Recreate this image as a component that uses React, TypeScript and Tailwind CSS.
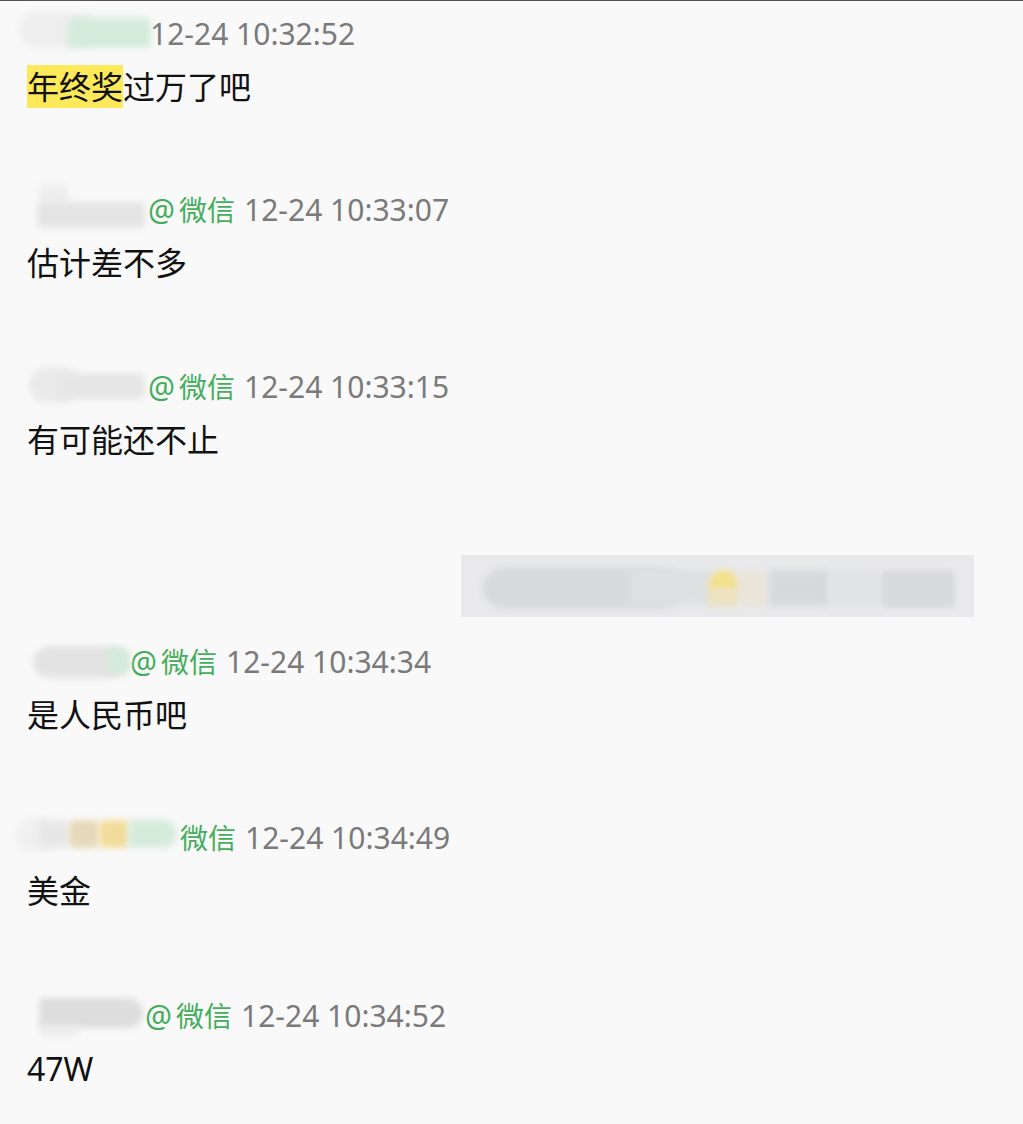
import React from 'react';

type Blob = { x: number; w: number; h: number; color: string; top?: number; round?: string };

type Msg = {
  blobs: Blob[];
  nameWidth: number;
  wechat: 'full' | 'partial' | 'none';
  time: string;
  text: React.ReactNode;
};

const font = { fontFamily: '"Noto Sans", "Noto Sans CJK SC", sans-serif' };

function NameBlur({ blobs, width }: { blobs: Blob[]; width: number }) {
  return (
    <div className="relative h-[40px] shrink-0" style={{ width }}>
      {blobs.map((b, i) => (
        <div
          key={i}
          className={`absolute blur-[3px] ${b.round ?? 'rounded-md'}`}
          style={{ left: b.x, top: b.top ?? 2, width: b.w, height: b.h, background: b.color }}
        />
      ))}
    </div>
  );
}

function Header({ m }: { m: Msg }) {
  return (
    <div className="flex items-center h-[36px] leading-none whitespace-nowrap">
      <NameBlur blobs={m.blobs} width={m.nameWidth} />
      {m.wechat === 'full' && (
        <span className="text-[#45ad5b] text-[28px]">
          <span className="text-[30px]">@</span>
          <span className="ml-[4px]">微信</span>
        </span>
      )}
      {m.wechat === 'partial' && <span className="text-[#45ad5b] text-[28px]">微信</span>}
      <span className="text-[#7a7a7a] text-[30px] ml-[9px]">{m.time}</span>
    </div>
  );
}

function Message({ m, className }: { m: Msg; className?: string }) {
  return (
    <div className={className}>
      <Header m={m} />
      <div className="h-[70px] text-[32px] leading-[70px] text-[#111] whitespace-nowrap">{m.text}</div>
    </div>
  );
}

const msgs: Msg[] = [
  {
    nameWidth: 114,
    blobs: [
      { x: -8, w: 80, h: 36, color: '#eeeeee', top: -2, round: 'rounded-full' },
      { x: 40, w: 84, h: 30, color: '#d4ecdc', top: 4 },
    ],
    wechat: 'none',
    time: '12-24 10:32:52',
    text: (
      <>
        <span className="bg-[#fde95a]">年终奖</span>过万了吧
      </>
    ),
  },
  {
    nameWidth: 121,
    blobs: [
      { x: 12, w: 30, h: 20, color: '#eeeeee', top: -6 },
      { x: 10, w: 108, h: 26, color: '#e4e4e4', top: 12 },
    ],
    wechat: 'full',
    time: '12-24 10:33:07',
    text: '估计差不多',
  },
  {
    nameWidth: 121,
    blobs: [
      { x: 2, w: 50, h: 36, color: '#eaeaea', top: 0, round: 'rounded-full' },
      { x: 30, w: 88, h: 26, color: '#e6e6e6', top: 6 },
    ],
    wechat: 'full',
    time: '12-24 10:33:15',
    text: '有可能还不止',
  },
];

const msgs2: Msg[] = [
  {
    nameWidth: 103,
    blobs: [
      { x: 6, w: 96, h: 32, color: '#e3e3e3', top: 4, round: 'rounded-full' },
      { x: 80, w: 22, h: 26, color: '#d3ecd9', top: 6 },
    ],
    wechat: 'full',
    time: '12-24 10:34:34',
    text: '是人民币吧',
  },
  {
    nameWidth: 153,
    blobs: [
      { x: -12, w: 40, h: 34, color: '#f0f0f0', top: 0, round: 'rounded-full' },
      { x: 12, w: 30, h: 28, color: '#e7e7e7', top: 2 },
      { x: 42, w: 30, h: 28, color: '#e6d9b9', top: 2 },
      { x: 72, w: 30, h: 28, color: '#f2dc9c', top: 2 },
      { x: 102, w: 48, h: 28, color: '#d5ebdb', top: 2, round: 'rounded-r-full' },
    ],
    wechat: 'partial',
    time: '12-24 10:34:49',
    text: '美金',
  },
  {
    nameWidth: 118,
    blobs: [
      { x: 12, w: 104, h: 30, color: '#dddddd', top: 2, round: 'rounded-r-full' },
      { x: 12, w: 40, h: 10, color: '#ebebeb', top: 30 },
    ],
    wechat: 'full',
    time: '12-24 10:34:52',
    text: '47W',
  },
];

export default function App() {
  return (
    <div className="w-[1023px] h-[1124px] bg-[#f9f9fa] border-t border-[#555555] overflow-hidden" style={font}>
      <div className="flex flex-col pl-[27px] pt-[15px]">
        <Message m={msgs[0]} className="mb-[70px]" />
        <Message m={msgs[1]} className="mb-[71px]" />
        <Message m={msgs[2]} />

        {/* quoted reply, blurred */}
        <div className="self-end mr-[49px] mt-[80px] w-[513px] h-[62px] bg-[#e9e9eb] flex items-center px-[20px]">
          <div className="relative flex-1 h-[44px]">
            <div className="absolute left-[2px] top-[4px] w-[200px] h-[40px] rounded-full bg-[#d8d9dc] blur-[3px]" />
            <div className="absolute left-[150px] top-[6px] w-[80px] h-[34px] bg-[#dfe0e2] blur-[3px]" />
            <div className="absolute left-[228px] top-[6px] w-[30px] h-[22px] bg-[#f2e08a] blur-[3px] rounded-t-full" />
            <div className="absolute left-[228px] top-[24px] w-[30px] h-[18px] bg-[#ece2bf] blur-[3px]" />
            <div className="absolute left-[258px] top-[8px] w-[28px] h-[34px] bg-[#e9e5d8] blur-[3px]" />
            <div className="absolute left-[288px] top-[6px] w-[60px] h-[36px] bg-[#d6d8dc] blur-[3px]" />
            <div className="absolute left-[348px] top-[6px] w-[50px] h-[36px] bg-[#e2e3e5] blur-[3px]" />
            <div className="absolute left-[400px] top-[6px] w-[74px] h-[38px] bg-[#d9dadd] blur-[2px] rounded-md" />
          </div>
        </div>

        <Message m={msgs2[0]} className="mt-[27px] mb-[70px]" />
        <Message m={msgs2[1]} className="mb-[72px]" />
        <Message m={msgs2[2]} />
      </div>
    </div>
  );
}
